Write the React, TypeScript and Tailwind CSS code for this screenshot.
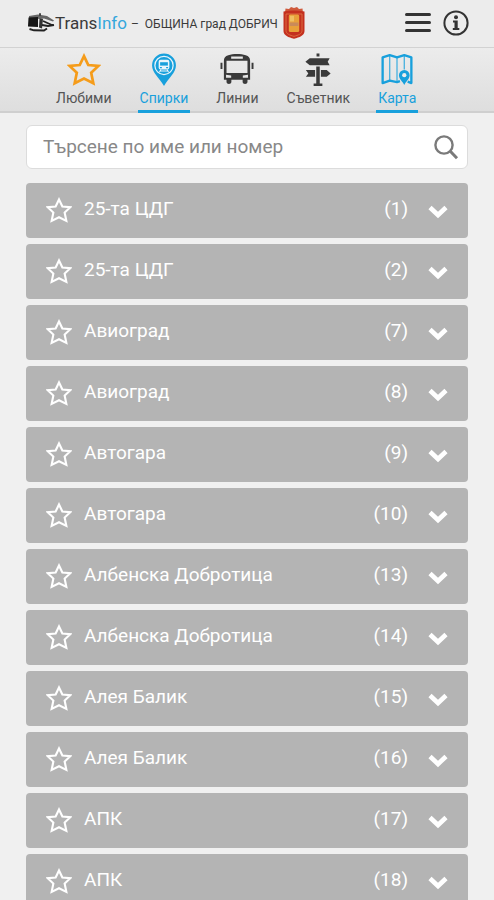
import React, { useState } from 'react';

interface Stop {
  name: string;
  code: number;
}

interface IconProps {
  className?: string;
}

const stops: Stop[] = [
  { name: '25-та ЦДГ', code: 1 },
  { name: '25-та ЦДГ', code: 2 },
  { name: 'Авиоград', code: 7 },
  { name: 'Авиоград', code: 8 },
  { name: 'Автогара', code: 9 },
  { name: 'Автогара', code: 10 },
  { name: 'Албенска Добротица', code: 13 },
  { name: 'Албенска Добротица', code: 14 },
  { name: 'Алея Балик', code: 15 },
  { name: 'Алея Балик', code: 16 },
  { name: 'АПК', code: 17 },
  { name: 'АПК', code: 18 }
];

const StarIcon: React.FC<IconProps> = ({ className }) => (
  <svg viewBox="0 0 34 34" className={className} fill="none" stroke="currentColor" strokeWidth="2.8" aria-hidden="true">
    <path d="M17 3.2 L21.4 12.4 L31.8 13.3 L24.4 20.4 L26.6 31.2 L17 26.4 L7.4 31.2 L9.6 20.4 L2.2 13.3 L12.6 12.4 Z" />
  </svg>
);

const PinIcon: React.FC<IconProps> = ({ className }) => (
  <svg viewBox="0 0 34 34" className={className} aria-hidden="true">
    <path d="M17 0.5 A12.3 12.3 0 0 0 4.7 12.8 C4.7 20 12 25.5 17 34 C22 25.5 29.3 20 29.3 12.8 A12.3 12.3 0 0 0 17 0.5 Z" fill="#18a0dc" />
    <circle cx="17" cy="12.8" r="9.4" fill="none" stroke="#e9f5fb" strokeWidth="1.3" />
    <rect x="11.5" y="7" width="11" height="10" rx="2" fill="#e9f5fb" />
    <path d="M13 9.5 H21 V13 H13 Z" fill="#18a0dc" />
    <path d="M12.8 14.3 H14.8 V15.7 H12.8 Z M19.2 14.3 H21.2 V15.7 H19.2 Z" fill="#18a0dc" />
    <path d="M13.8 17 L12.4 19.6 M20.2 17 L21.6 19.6 M13.5 18.6 H20.5" stroke="#e9f5fb" strokeWidth="1.1" />
  </svg>
);

const BusIcon: React.FC<IconProps> = ({ className }) => (
  <svg viewBox="0 0 34 34" className={className} fill="#3a3a3a" aria-hidden="true">
    <path
      fillRule="evenodd"
      d="M8 2.3 C13 0.6 21 0.6 26 2.3 C29 3.3 30.5 5 30.5 8 V27.5 H27.8 V30 C27.8 32.7 22.8 32.7 22.8 30 V27.5 H11.2 V30 C11.2 32.7 6.2 32.7 6.2 30 V27.5 H3.5 V8 C3.5 5 5 3.3 8 2.3 Z M6.2 8 V20.5 H27.8 V8 Z M11 3.5 V5.8 H23 V3.5 Z M5.7 22.3 V25.6 H11 V23.3 Z M28.3 22.3 L23 23.3 V25.6 H28.3 Z"
    />
    <path d="M0 10 H2 V16.5 H0 Z M32 10 H34 V16.5 H32 Z" />
  </svg>
);

const SignpostIcon: React.FC<IconProps> = ({ className }) => (
  <svg viewBox="0 0 34 34" className={className} fill="#3a3a3a" aria-hidden="true">
    <path d="M15.5 0.5 H18.5 V3.6 H15.5 Z" />
    <path d="M8.5 5.5 H29 L27 9 L29 12.5 H8.5 L4 9 Z" />
    <path d="M4.5 17.5 H14 V24.5 H4.5 L7 21 Z M20 17.5 H26 L30 21 L26 24.5 H20 Z" />
    <path d="M15.2 14 H18.8 V31.5 H21.5 V34 H12.5 V31.5 H15.2 Z" />
  </svg>
);

const MapIcon: React.FC<IconProps> = ({ className }) => (
  <svg viewBox="0 0 34 34" className={className} fill="none" stroke="#18a0dc" aria-hidden="true">
    <path d="M20 29 L17 30 L9.5 28.5 L2.2 31 V4.5 L9.5 2.2 L17 4.5 L24.5 2.2 L31.8 4.5 V31 L28 29.5" strokeWidth="2.4" strokeLinejoin="round" />
    <path d="M9.5 3 V28 M17 5 V29 M24.5 3 V17" strokeWidth="1.3" opacity="0.8" />
    <path d="M24.5 33 C22.5 29 19 27 19 23 A5.5 5.5 0 0 1 30 23 C30 27 26.5 29 24.5 33 Z" fill="#18a0dc" stroke="none" />
    <circle cx="24.5" cy="22.8" r="2.2" fill="#ececec" stroke="none" />
  </svg>
);

const LogoIcon: React.FC<IconProps> = ({ className }) => (
  <svg viewBox="0 0 28 20" className={className} aria-hidden="true">
    <path d="M2 3 L11 1.5 L20 3 L27 7.5 L26 8.5 L17 5.5 L13 6 L2 5 Z" fill="#666" />
    <path d="M1.5 4.5 L11 4 V14 L1 13.5 Z" fill="#151515" />
    <path d="M12.5 5.5 L16 6 L15 15.5 L12 14.5 Z" fill="#333" />
    <path d="M16 8 L26 12.5 M15 12 L21 13 L27 12 M2.5 16 L7 17.3 L17 17.5 L20 15.5" fill="none" stroke="#222" strokeWidth="1.9" />
    <path d="M12 0.3 H14 V3 H12 Z" fill="#444" />
  </svg>
);

const CrestIcon: React.FC<IconProps> = ({ className }) => (
  <svg viewBox="0 0 24 34" className={className} aria-hidden="true">
    <path d="M3 7 L3.5 2.5 L7 3 L9 1 L12 2 L15 1 L17 3 L20.5 2.5 L21 7 Z" fill="#cf5a3c" />
    <path d="M1.5 5.5 Q12 3.5 22.5 5.5 V25 C22.5 29.5 17.5 31.5 12 32.7 C6.5 31.5 1.5 29.5 1.5 25 Z" fill="#c4301f" />
    <path d="M4 8 H20 V24.5 C20 28 16 29.3 12 30.3 C8 29.3 4 28 4 24.5 Z" fill="none" stroke="#dc6a40" strokeWidth="1" />
    <rect x="6.8" y="8.5" width="10.4" height="17.5" rx="1.5" fill="#e8a03a" />
    <path d="M7.5 16.5 H16.5 V20 H7.5 Z" fill="#c98a5a" />
    <path d="M8 9.8 H12 V15.5 H8 Z" fill="#efbf62" />
  </svg>
);

const tabs = [
  { id: 'favorites', label: 'Любими', icon: <StarIcon className="size-[34px] text-[#f59c1a]" />, active: false },
  { id: 'stops', label: 'Спирки', icon: <PinIcon className="size-[34px]" />, active: true },
  { id: 'lines', label: 'Линии', icon: <BusIcon className="size-[34px]" />, active: false },
  { id: 'advisor', label: 'Съветник', icon: <SignpostIcon className="size-[34px]" />, active: false },
  { id: 'map', label: 'Карта', icon: <MapIcon className="size-[34px]" />, active: true }
];

const Header: React.FC = () => (
  <header className="flex h-12 items-center border-b border-[#d2d2d2] bg-[#ececec] pb-0.5 pl-[27px] pr-[25px]">
    <LogoIcon className="h-5 w-7 shrink-0" />
    <h1 className="flex items-center whitespace-nowrap pt-0.5 text-[#3a3a3a]">
      <span className="text-[17px]">
        Trans<span className="text-[#35a7dc]">Info</span>
      </span>
      <span className="ml-1 flex gap-1.5 text-xs">
        <span>–</span>
        <span>ОБЩИНА град ДОБРИЧ</span>
      </span>
    </h1>
    <CrestIcon className="ml-1 h-[34px] w-6 shrink-0" />
    <div className="ml-auto flex items-center gap-3">
      <button type="button" aria-label="Меню" className="flex w-[26px] flex-col gap-[5px]">
        <span className="h-[3px] rounded-full bg-[#333]" />
        <span className="h-[3px] rounded-full bg-[#333]" />
        <span className="h-[3px] rounded-full bg-[#333]" />
      </button>
      <button type="button" aria-label="Информация">
        <svg viewBox="0 0 26 26" className="size-[26px]" aria-hidden="true">
          <circle cx="13" cy="13" r="11.6" fill="none" stroke="#333" strokeWidth="2" />
          <circle cx="13" cy="7.3" r="2" fill="#333" />
          <path d="M10 10.5 H14.7 V18 H16.3 V20 H9.8 V18 H11.5 V12.5 H10 Z" fill="#333" />
        </svg>
      </button>
    </div>
  </header>
);

const StopRow: React.FC<{ stop: Stop }> = ({ stop }) => (
  <li className="flex h-[55px] items-center rounded bg-[#b4b4b4] px-5 pb-0.5 text-white">
    <button type="button" aria-label="Добави в любими">
      <StarIcon className="size-[26px]" />
    </button>
    <span className="ml-3 flex-1 text-[19px]">{stop.name}</span>
    <span className="text-[19px]">({stop.code})</span>
    <button type="button" aria-label="Покажи" className="ml-5 pt-0.5">
      <svg viewBox="0 0 20 20" className="size-5" aria-hidden="true">
        <path d="M2 6.5 L10 14 L18 6.5" fill="none" stroke="currentColor" strokeWidth="4.6" />
      </svg>
    </button>
  </li>
);

export default function App() {
  const [query, setQuery] = useState('');

  return (
    <div className="min-h-screen bg-[#f0f0f0] font-[Roboto,sans-serif]">
      <Header />
      <nav className="flex h-[65px] gap-6 border-b-2 border-[#cfcfcf] bg-linear-to-b from-[#ececec] to-[#dedede] pl-[54px]">
        {tabs.map((tab) => (
          <a
            key={tab.id}
            href={`#${tab.id}`}
            className={`-mb-0.5 flex flex-col items-center border-b-[3px] px-0.5 pt-[5px] text-sm leading-6 ${
              tab.active ? 'border-[#18a0dc] text-[#18a0dc]' : 'border-transparent text-[#555]'
            }`}
          >
            {tab.icon}
            {tab.label}
          </a>
        ))}
      </nav>

      <main className="px-[26px] pt-3">
        <label className="flex h-11 items-center rounded-md border border-[#dcdcdc] bg-white pl-4 pr-2">
          <input
            type="text"
            aria-label="Търсене"
            value={query}
            onChange={(e) => setQuery(e.target.value)}
            placeholder="Търсене по име или номер"
            className="min-w-0 flex-1 text-[19px] text-[#555] outline-none placeholder:text-[#888]"
          />
          <svg viewBox="0 0 26 26" className="size-[26px]" fill="none" stroke="#7a7a7a" aria-hidden="true">
            <circle cx="11" cy="11" r="8.6" strokeWidth="2.4" />
            <path d="M17.3 17.3 L24 24.3" strokeWidth="3" />
          </svg>
        </label>

        <ul className="mt-3.5 flex flex-col gap-1.5">
          {stops.map((stop) => (
            <StopRow key={stop.code} stop={stop} />
          ))}
        </ul>
      </main>
    </div>
  );
}
